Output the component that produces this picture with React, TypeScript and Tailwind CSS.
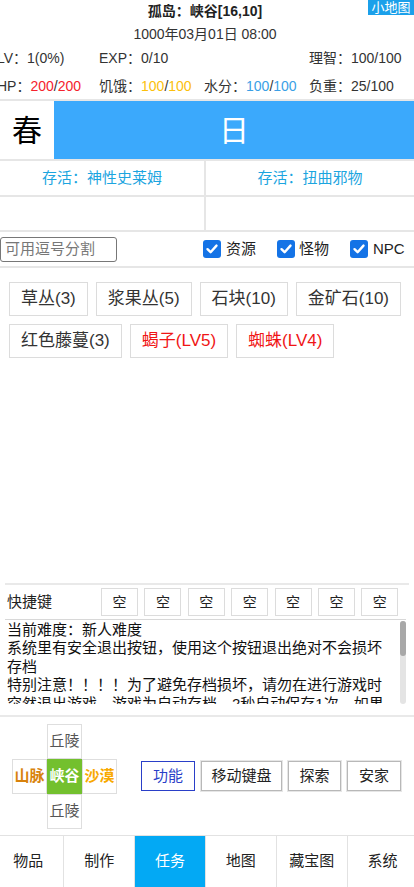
import React from "react";

const Check = () => (
  <span className="w-[18px] h-[18px] rounded-[3px] bg-[#1473e6] flex items-center justify-center shrink-0">
    <svg width="14" height="14" viewBox="0 0 14 14">
      <path d="M2.5 7.2 L5.6 10.2 L11.5 3.6" stroke="white" strokeWidth="2.4" fill="none" strokeLinecap="round" strokeLinejoin="round" />
    </svg>
  </span>
);

const Item = ({ label, red }: { label: string; red?: boolean }) => (
  <div
    className={
      "h-[34px] px-[11px] border border-[#dcdcdc] flex items-center text-[17px] " +
      (red ? "text-[#f01515]" : "text-[#333]")
    }
  >
    {label}
  </div>
);

export default function App() {
  const row1 = ["草丛(3)", "浆果丛(5)", "石块(10)", "金矿石(10)"];
  const tabs = ["物品", "制作", "任务", "地图", "藏宝图", "系统"];
  return (
    <div className="w-[414px] h-[887px] overflow-hidden bg-white flex flex-col text-[#333] font-['Liberation_Sans','Noto_Sans_CJK_SC',sans-serif]">
      {/* header */}
      <div className="relative h-[99px] shrink-0">
        <div className="h-[22px] flex items-center justify-center text-[14px] font-bold text-[#222] mr-[4px]">
          孤岛：峡谷[16,10]
        </div>
        <div className="absolute right-0 top-0 h-[15px] w-[46px] bg-[#1ba0ea] text-white text-[13px] leading-[15px] text-center">
          小地图
        </div>
        <div className="h-[24px] flex items-center justify-center text-[14px] text-[#333] mr-[4px]">
          1000年03月01日 08:00
        </div>
        <div className="h-[24px] flex items-center text-[14px] ml-[-3px]">
          <div className="w-[103px]">LV：1(0%)</div>
          <div className="w-[106px]">EXP：0/10</div>
          <div className="w-[106px]"></div>
          <div className="w-[106px]">理智：100/100</div>
        </div>
        <div className="h-[29px] pt-[3px] flex items-center text-[14px] ml-[-3px]">
          <div className="w-[103px]">
            HP：<span className="text-[#f5222d]">200</span>/<span className="text-[#f5222d]">200</span>
          </div>
          <div className="w-[106px]">
            饥饿：<span className="text-[#fcbf0c]">100</span>/<span className="text-[#fcbf0c]">100</span>
          </div>
          <div className="w-[106px]">
            水分：<span className="text-[#3a9fe6]">100</span>/<span className="text-[#3a9fe6]">100</span>
          </div>
          <div className="w-[106px]">负重：25/100</div>
        </div>
      </div>
      <div className="h-[2px] bg-[#e6e6e6] shrink-0" />
      {/* season */}
      <div className="h-[58px] flex shrink-0">
        <div className="w-[54px] flex items-center justify-center text-[30px] text-black">春</div>
        <div className="flex-1 bg-[#3ba9fc] flex items-center justify-center text-[30px] text-white">日</div>
      </div>
      <div className="h-[2px] bg-[#e6e6e6] shrink-0" />
      <div className="h-[34px] flex shrink-0 text-[15px] text-[#1ca5df]">
        <div className="w-[204px] flex items-center justify-center">存活：神性史莱姆</div>
        <div className="w-[2px] bg-[#e6e6e6]" />
        <div className="flex-1 flex items-center justify-center">存活：扭曲邪物</div>
      </div>
      <div className="h-[2px] bg-[#e6e6e6] shrink-0" />
      <div className="h-[33px] flex shrink-0">
        <div className="w-[204px]" />
        <div className="w-[2px] bg-[#e6e6e6]" />
        <div className="flex-1" />
      </div>
      <div className="h-[2px] bg-[#e6e6e6] shrink-0" />
      {/* filter */}
      <div className="h-[34px] flex items-center shrink-0 text-[15px]">
        <div className="w-[117px] h-[25px] border border-[#777] rounded-[3px] flex items-center pl-[4px] text-[#777]">
          可用逗号分割
        </div>
        <div className="ml-[86px] flex items-center gap-[5px]">
          <Check />
          <span className="text-[#222]">资源</span>
        </div>
        <div className="ml-[21px] flex items-center gap-[4px]">
          <Check />
          <span className="text-[#222]">怪物</span>
        </div>
        <div className="ml-[21px] flex items-center gap-[5px]">
          <Check />
          <span className="text-[#222]">NPC</span>
        </div>
      </div>
      <div className="h-[2px] bg-[#e6e6e6] shrink-0" />
      {/* items */}
      <div className="flex-1 pt-[14px] pl-[9px] flex flex-col gap-[8px]">
        <div className="flex gap-[8px]">
          {row1.map((t) => (
            <Item key={t} label={t} />
          ))}
        </div>
        <div className="flex gap-[8px]">
          <Item label="红色藤蔓(3)" />
          <Item label="蝎子(LV5)" red />
          <Item label="蜘蛛(LV4)" red />
        </div>
      </div>
      {/* quick keys */}
      <div className="h-[2px] bg-[#e9e9e9] shrink-0 mx-[5px]" />
      <div className="h-[34px] flex items-center shrink-0">
        <div className="w-[101px] pl-[7px] text-[15px] text-[#222]">快捷键</div>
        <div className="flex gap-[6.4px]">
          {Array.from({ length: 7 }).map((_, i) => (
            <div
              key={i}
              className="w-[37px] h-[28px] border border-[#dcdcdc] flex items-center justify-center text-[14px] text-[#222]"
            >
              空
            </div>
          ))}
        </div>
      </div>
      <div className="relative h-[85px] shrink-0 border-t border-[#d8d8d8] ml-[5px] mr-[8px] overflow-hidden">
        <div className="pl-[2px] pt-[1px] text-[15px] leading-[18.4px] text-[#111] whitespace-nowrap">
          <div>当前难度：新人难度</div>
          <div>系统里有安全退出按钮，使用这个按钮退出绝对不会损坏</div>
          <div>存档</div>
          <div>特别注意！！！！为了避免存档损坏，请勿在进行游戏时</div>
          <div>突然退出游戏，游戏为自动存档，2秒自动保存1次，如果</div>
        </div>
        <div className="absolute right-[0px] top-[1px] bottom-[0px] w-[6px] rounded-full bg-[#e4e4e4]">
          <div className="h-[35px] w-[6px] rounded-full bg-[#a8a8a8]" />
        </div>
      </div>
      <div className="h-[11px] shrink-0" />
      <div className="h-[2px] bg-[#e9e9e9] shrink-0" />
      {/* dpad + buttons */}
      <div className="h-[118px] flex items-center shrink-0">
        <div className="ml-[12px] grid grid-cols-[35px_35px_35px] grid-rows-[35px_35px_35px] text-[15px]">
          <div />
          <div className="border border-[#dedede] flex items-center justify-center text-[#555]">丘陵</div>
          <div />
          <div className="border border-[#dedede] flex items-center justify-center text-[#d8820c] font-bold">山脉</div>
          <div className="bg-[#73c02e] flex items-center justify-center text-white font-bold">峡谷</div>
          <div className="border border-[#dedede] flex items-center justify-center text-[#f8a900] font-bold">沙漠</div>
          <div />
          <div className="border border-[#dedede] flex items-center justify-center text-[#555]">丘陵</div>
          <div />
        </div>
        <div className="ml-[24px] flex gap-[6px] text-[15px]">
          <div className="w-[54px] h-[30px] border border-[#2a3fc8] flex items-center justify-center text-[#2a3fc8]">功能</div>
          <div className="w-[81px] h-[30px] border border-[#b8b8b8] shadow-[0_0_0_1px_#e6e6e6] flex items-center justify-center text-[#222]">移动键盘</div>
          <div className="w-[53px] h-[30px] border border-[#b8b8b8] shadow-[0_0_0_1px_#e6e6e6] flex items-center justify-center text-[#222]">探索</div>
          <div className="w-[54px] h-[30px] border border-[#b8b8b8] shadow-[0_0_0_1px_#e6e6e6] flex items-center justify-center text-[#222]">安家</div>
        </div>
      </div>
      {/* nav */}
      <div className="h-[1px] bg-[#e2e2e2] shrink-0" />
      <div className="h-[51px] flex shrink-0 ml-[-6.6px] w-[424px]">
        {tabs.map((t, i) => (
          <div
            key={t}
            className={
              "flex-1 flex items-center justify-center text-[15px] " +
              (i > 0 ? "border-l border-[#e2e2e2] " : "") +
              (i === 2 ? "bg-[#03a9f4] text-white" : "text-[#222]")
            }
          >
            {t}
          </div>
        ))}
      </div>
    </div>
  );
}
